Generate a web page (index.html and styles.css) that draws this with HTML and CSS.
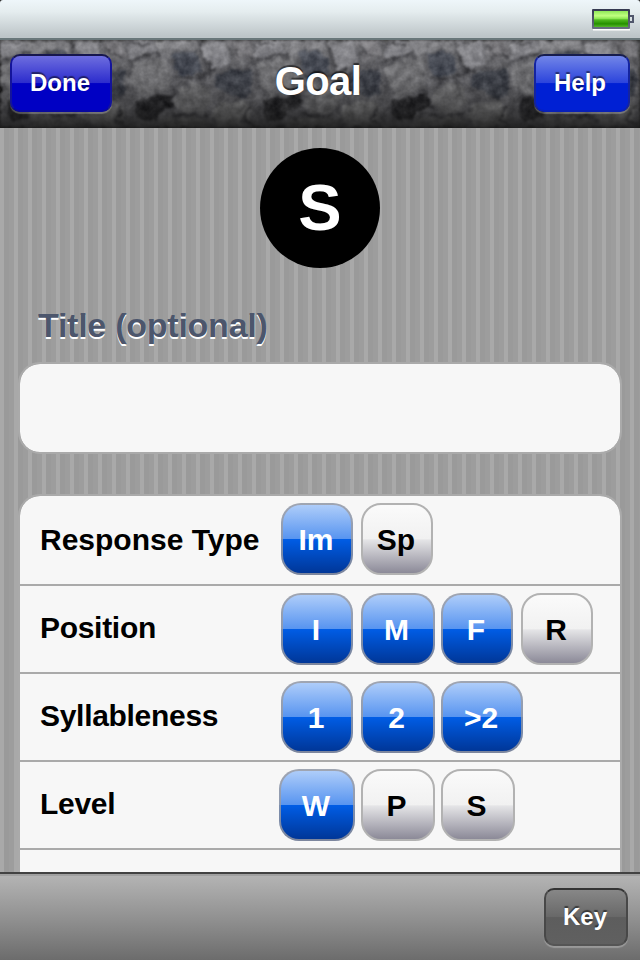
FILE: index.html
```html
<!DOCTYPE html>
<html lang="en">
<head>
<meta charset="utf-8">
<title>Goal</title>
<link rel="stylesheet" href="styles.css">
</head>
<body>
<div class="screen">
  <div class="status">
    <svg class="battery" width="42" height="22" viewBox="0 0 42 22">
      <defs><linearGradient id="charge" x2="0" y2="1"><stop stop-color="#8fe858"/><stop offset=".3" stop-color="#c0ff80"/><stop offset=".48" stop-color="#8be651"/><stop offset=".55" stop-color="#50ba20"/><stop offset=".8" stop-color="#259000"/><stop offset="1" stop-color="#54b72a"/></linearGradient>
      <linearGradient id="shell" x2="0" y2="1"><stop stop-color="#343850"/><stop offset="1" stop-color="#687080"/></linearGradient></defs>
      <path d="M1 20.5h37" stroke="#fff" stroke-width="2"/>
      <rect width="38" height="20" rx="1" fill="url(#shell)"/>
      <rect x="2" y="2" width="34" height="16" fill="url(#charge)"/>
      <path d="M38 7h3v6h-3" fill="none" stroke="#50566b" stroke-width="2"/>
    </svg>
  </div>
  <header class="navbar">
    <svg class="stone" width="640" height="88" aria-hidden="true">
      <defs>
        <filter id="rock" x="0" y="0" width="100%" height="100%" color-interpolation-filters="sRGB">
          <feTurbulence type="fractalNoise" baseFrequency=".11" numOctaves="3" seed="8" result="n"/>
          <feDisplacementMap in="SourceGraphic" in2="n" scale="8" xChannelSelector="R" yChannelSelector="G" result="d"/>
          <feGaussianBlur in="d" stdDeviation="1" result="b"/>
          <feColorMatrix in="n" type="matrix" values="1 0 0 0 0 1 0 0 0 0 1 0 0 0 0 0 0 0 0 1" result="g"/>
          <feComposite in="b" in2="g" operator="arithmetic" k2="1" k3=".28" k4="-.13"/>
        </filter>
        <pattern id="stones" width="128" height="88" patternUnits="userSpaceOnUse">
          <rect width="128" height="88" fill="#59595d"/>
          <path d="M0 0H22L30 11 12 17 0 19Z" fill="#77777c"/>
          <path d="M26 0H67L74 10 45 10 34 18Z" fill="#727276"/>
          <path d="M2 25L20 20 38 17 43 36 40 49 15 56 2 44Z" fill="#6f6f72"/>
          <path d="M44 12L66 11 72 20 73 33 52 37 45 27Z" fill="#3f434d"/>
          <path d="M74 5L97 0 102 23 83 30Z" fill="#7d7d82"/>
          <path d="M102 3L120 0 128 17 108 20Z" fill="#6b6a6e"/>
          <path d="M88 35L101 30 125 29 124 54 113 59 102 53 87 48Z" fill="#3c3f47"/>
          <path d="M8 60L26 57 44 53 47 67 34 70 29 79 12 81 7 72Z" fill="#232326"/>
          <path d="M51 50L65 43 79 46 84 60 75 73 56 73 48 62Z" fill="#6a6a6c"/>
          <path d="M90 64L115 61 124 67 121 84 96 88 84 77Z" fill="#747475"/>
          <path d="M35 79L65 76 82 81 80 88H29Z" fill="#656566"/>
          <g fill="none" stroke="#39393d" stroke-width="2.5">
            <path d="M0 21L14 17 31 12M70 1L75 17 82 33M48 37L60 39 77 35 90 29M44 73L58 76 80 75M122 66L115 80 128 87"/>
            <path d="M104 5L110 14 126 18M0 2L20 4" stroke-width="1.8"/>
          </g>
        </pattern>
        <linearGradient id="shade" x2="0" y2="1"><stop stop-color="#fff" stop-opacity=".12"/><stop offset=".45" stop-color="#222" stop-opacity=".08"/><stop offset=".75" stop-color="#181818" stop-opacity=".35"/><stop offset="1" stop-color="#161616" stop-opacity=".84"/></linearGradient>
      </defs>
      <rect width="640" height="88" fill="url(#stones)" filter="url(#rock)"/>
      <rect width="640" height="88" fill="url(#shade)"/>
    </svg>
    <button class="bar-button done">Done</button>
    <h1>Goal</h1>
    <button class="bar-button help">Help</button>
  </header>
  <main>
    <div class="badge">S</div>
    <h2>Title (optional)</h2>
    <div class="card field"></div>
    <section class="card options">
      <div class="row first"><span class="label">Response Type</span><div class="chips"><button class="chip on">Im</button><button class="chip">Sp</button></div></div>
      <div class="row"><span class="label">Position</span><div class="chips"><button class="chip on">I</button><button class="chip on mid">M</button><button class="chip on">F</button><button class="chip">R</button></div></div>
      <div class="row"><span class="label">Syllableness</span><div class="chips"><button class="chip on">1</button><button class="chip on mid">2</button><button class="chip on wide">&gt;2</button></div></div>
      <div class="row"><span class="label">Level</span><div class="chips level"><button class="chip on large">W</button><button class="chip mid">P</button><button class="chip mid">S</button></div></div>
    </section>
  </main>
  <footer><button class="bar-button key">Key</button></footer>
</div>
</body>
</html>
```
FILE: styles.css
```css
* { box-sizing: border-box; }
body { margin: 0; font-family: "Liberation Sans", Arial, sans-serif; font-weight: bold; }
button { font: inherit; padding: 0; margin: 0; }
.screen { width: 640px; height: 960px; overflow: hidden; display: flex; flex-direction: column; background: #222; }

.status { height: 40px; flex: none; display: flex; justify-content: flex-end; padding: 9px 6px 0 0; background: linear-gradient(#eef6fa, #e5edef 30%, #bdc5c8 95%); border-bottom: 2px solid #69777a; border-radius: 3px 3px 0 0; }
.battery { display: block; }

.navbar { height: 88px; flex: none; position: relative; display: flex; justify-content: space-between; padding: 14px 10px 0; }
.stone { position: absolute; inset: 0; }
h1 { position: relative; margin: 4px 10px 0 0; font-size: 40px; line-height: 46px; letter-spacing: -.6px; color: #fff; text-shadow: 0 -2px 1px rgba(0,0,0,.55); }
.bar-button { position: relative; height: 58px; border-radius: 10px; border: 2px solid; color: #fff; font-size: 24px; line-height: 54px; text-indent: -2px; text-shadow: 0 -2px 1px rgba(0,0,0,.5); box-shadow: 0 2px 1px rgba(255,255,255,.25); }
.done { width: 102px; border-color: #17174e #14149a #0808a0; background: linear-gradient(#6e6edf, #2b2bcd 50%, #0000c4 51%, #0000c4); }
.help { width: 96px; text-indent: -4px; border-color: #171d4e #1424a0 #0820b8; background: linear-gradient(#7286e8, #2b43dc 50%, #0020d4 51%, #0020d4); }

main { flex: 1; min-height: 0; overflow: hidden; padding: 20px 18px 0; background: repeating-linear-gradient(90deg, #a9a9a9 0 4px, #9a9a9a 4px 9px, #9d9d9d 9px 14px); }
.badge { width: 120px; height: 120px; margin: 0 auto; border-radius: 50%; background: #000; color: #fff; font-size: 65px; line-height: 119px; text-align: center; }
h2 { margin: 37px 0 0 20px; font-size: 34px; line-height: 40px; letter-spacing: -.25px; color: #4c566c; text-shadow: 0 2px 0 #fff; }
.card { background: #f7f7f7; background-clip: padding-box; border: 2px solid #aaa; border-radius: 22px; }
.field { height: 92px; margin-top: 17px; }
.options { margin-top: 40px; height: 420px; }
.row { height: 88px; display: flex; padding-left: 20px; border-bottom: 2px solid #aaa; }
.first { height: 90px; }
.label { width: 241px; font-size: 30px; line-height: 83px; letter-spacing: -.3px; color: #000; }
.first .label { line-height: 87px; letter-spacing: 0; }
.chips { display: flex; gap: 8px; padding-top: 7px; }
.chip { width: 72px; height: 72px; border: 2px solid #b2b2b2; border-radius: 20px; color: #000; font-size: 30px; line-height: 69px; text-indent: -2px; background: linear-gradient(#fbfbfb, #f1f1f1 50%, #e5e5e7 51%, #868493) border-box; }
.on { color: #fff; border-color: rgba(155,155,160,.8); background: linear-gradient(#b3d0fa, #5794f0 50%, #005de6 50%, #003493) border-box; }
.mid { width: 74px; text-indent: -3px; }
.mid + .chip { margin-left: -2px; }
.wide { width: 82px; }
.large { width: 76px; }
.level { margin-left: -2px; gap: 6px; }
.level .mid + .mid { margin-left: 0; }

footer { height: 88px; flex: none; display: flex; justify-content: flex-end; padding: 14px 12px 0 0; border-top: 2px solid #424242; background: linear-gradient(#b5b5b5, #929292 50%, #6c6c6c); box-shadow: inset 0 2px 0 #a0a0a0; }
.key { width: 84px; border-color: #343434 #484848 #555; background: linear-gradient(#878787, #686868 50%, #5d5d5d 51%, #606060); }
```
